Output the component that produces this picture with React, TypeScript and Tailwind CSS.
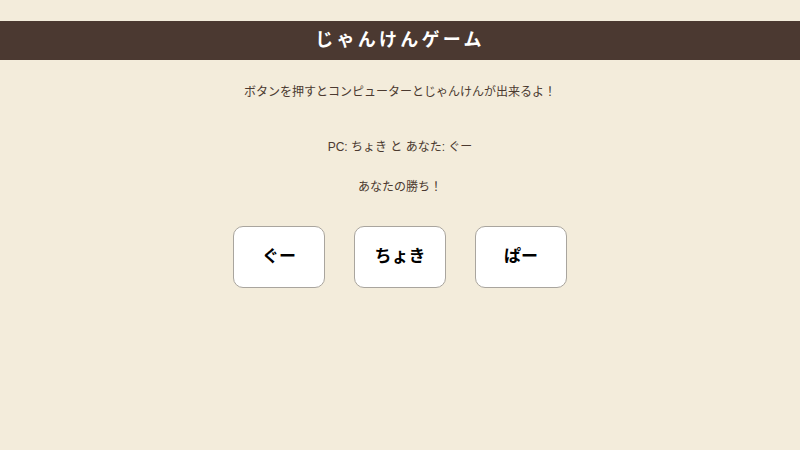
import React, { useState } from "react";

const hands = ["ぐー", "ちょき", "ぱー"];

function judge(pc: number, me: number) {
  if (pc === me) return "あいこ！";
  return (me - pc + 3) % 3 === 2 ? "あなたの勝ち！" : "あなたの負け…";
}

export default function App() {
  const [pc, setPc] = useState(1);
  const [me, setMe] = useState(0);

  const play = (i: number) => {
    setMe(i);
    setPc(Math.floor(Math.random() * 3));
  };

  return (
    <div
      className="min-h-[450px] bg-[#f3ecdb] pt-[21px] text-[#4b3a30]"
      style={{ fontFamily: '"Liberation Sans", "Noto Sans CJK JP", sans-serif' }}
    >
      <h1 className="flex h-[39px] items-center justify-center bg-[#4b3931] text-[18px] font-bold tracking-[0.18em] text-white">
        じゃんけんゲーム
      </h1>
      <p className="mt-[23px] text-center text-[12px] leading-[18px]">
        ボタンを押すとコンピューターとじゃんけんが出来るよ！
      </p>
      <p className="mt-[37px] text-center text-[12px] leading-[18px]">
        PC: {hands[pc]} と あなた: {hands[me]}
      </p>
      <p className="mt-[22px] text-center text-[12px] leading-[18px]">
        {judge(pc, me)}
      </p>
      <div className="mt-[30px] flex justify-center gap-[29px]">
        {hands.map((h, i) => (
          <button
            key={h}
            onClick={() => play(i)}
            className="h-[62px] w-[92px] rounded-[10px] border border-[#a9a59e] bg-white text-[17px] font-bold text-black"
          >
            {h}
          </button>
        ))}
      </div>
    </div>
  );
}
